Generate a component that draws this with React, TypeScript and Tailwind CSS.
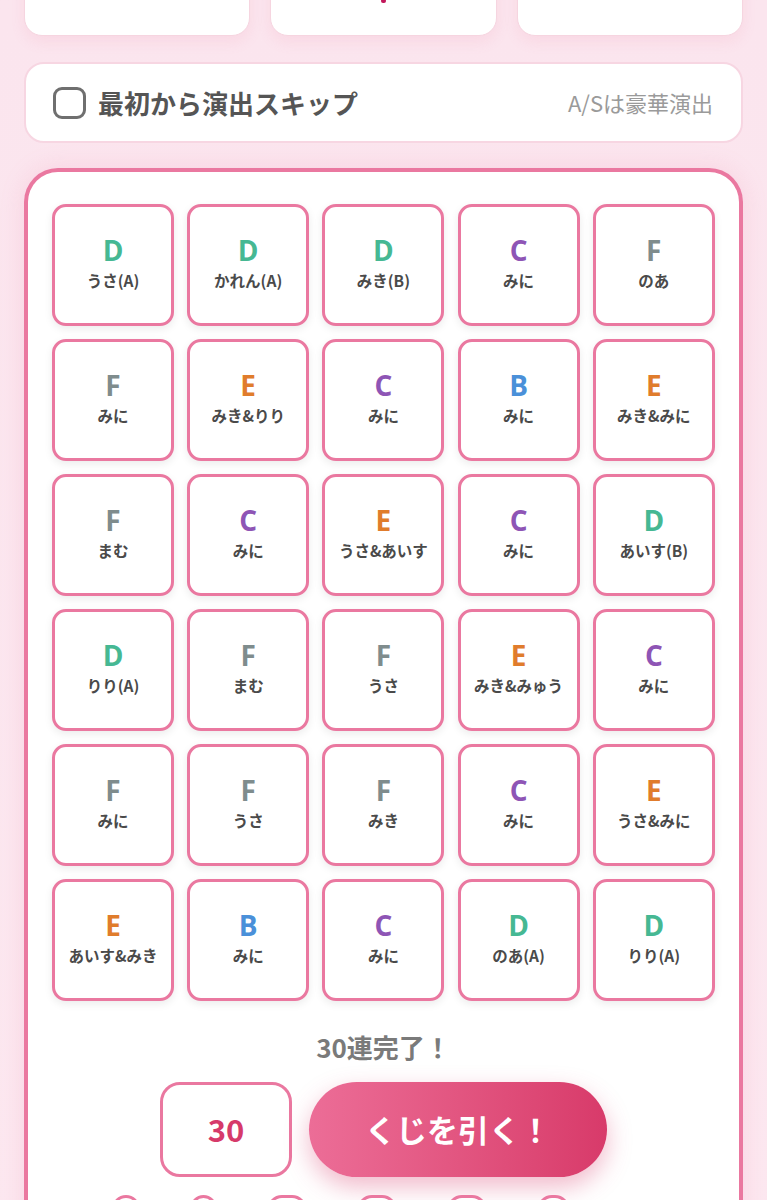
import React from 'react';

type Pull = { rank: string; name: string };

const pulls: Pull[] = [
  { rank: 'D', name: 'うさ(A)' },
  { rank: 'D', name: 'かれん(A)' },
  { rank: 'D', name: 'みき(B)' },
  { rank: 'C', name: 'みに' },
  { rank: 'F', name: 'のあ' },
  { rank: 'F', name: 'みに' },
  { rank: 'E', name: 'みき&りり' },
  { rank: 'C', name: 'みに' },
  { rank: 'B', name: 'みに' },
  { rank: 'E', name: 'みき&みに' },
  { rank: 'F', name: 'まむ' },
  { rank: 'C', name: 'みに' },
  { rank: 'E', name: 'うさ&あいす' },
  { rank: 'C', name: 'みに' },
  { rank: 'D', name: 'あいす(B)' },
  { rank: 'D', name: 'りり(A)' },
  { rank: 'F', name: 'まむ' },
  { rank: 'F', name: 'うさ' },
  { rank: 'E', name: 'みき&みゅう' },
  { rank: 'C', name: 'みに' },
  { rank: 'F', name: 'みに' },
  { rank: 'F', name: 'うさ' },
  { rank: 'F', name: 'みき' },
  { rank: 'C', name: 'みに' },
  { rank: 'E', name: 'うさ&みに' },
  { rank: 'E', name: 'あいす&みき' },
  { rank: 'B', name: 'みに' },
  { rank: 'C', name: 'みに' },
  { rank: 'D', name: 'のあ(A)' },
  { rank: 'D', name: 'りり(A)' },
];

const rankColor: Record<string, string> = {
  B: 'text-[#4a90d9]',
  C: 'text-[#8e55b5]',
  D: 'text-[#46b893]',
  E: 'text-[#e07c2c]',
  F: 'text-[#7f8c8d]',
};

const font = { fontFamily: "'Noto Sans CJK JP', 'Noto Sans', sans-serif" };

function PullCard({ pull }: { pull: Pull }) {
  return (
    <div className="flex h-[122px] w-[122px] flex-col items-center justify-center rounded-[14px] border-[3px] border-[#ea78a0] bg-white pb-[5px] shadow-[0_3px_8px_rgba(0,0,0,0.08)]">
      <div className={`text-[28px] leading-[30px] font-bold ${rankColor[pull.rank]}`} style={{ fontFamily: "'Open Sans', 'Noto Sans', sans-serif" }}>
        {pull.rank}
      </div>
      <div className="mt-[4px] text-[15.5px] leading-[22px] font-bold text-[#4a4a4a]">{pull.name}</div>
    </div>
  );
}

export default function App() {
  return (
    <div className="min-h-[1200px] overflow-hidden bg-gradient-to-b from-[#fbe5ee] to-[#fce8f0] px-6" style={font}>
      {/* Top stat cards (scrolled partly out of view) */}
      <div className="mt-[-64px] grid grid-cols-3 gap-[20px]">
        <div className="h-[100px] rounded-[18px] border border-[#f6d5e0] bg-white shadow-[0_6px_14px_rgba(236,120,160,0.12)]" />
        <div className="flex h-[100px] items-end justify-center rounded-[18px] border border-[#f6d5e0] bg-white pb-[32px] shadow-[0_6px_14px_rgba(236,120,160,0.12)]">
          <div className="h-[4px] w-[5px] rounded-full bg-[#c2185b]" />
        </div>
        <div className="h-[100px] rounded-[18px] border border-[#f6d5e0] bg-white shadow-[0_6px_14px_rgba(236,120,160,0.12)]" />
      </div>

      {/* Skip option */}
      <div className="mt-[26px] flex h-[81px] items-center justify-between rounded-[20px] border-2 border-[#f7d6e2] bg-white pr-[28px] pl-[27px]">
        <label className="flex items-center gap-[12px]">
          <span className="block h-[32px] w-[33px] rounded-[9px] border-[3px] border-[#6f6f6f] bg-white" />
          <span className="text-[26px] font-bold text-[#555]">最初から演出スキップ</span>
        </label>
        <span className="text-[22px] text-[#9a9a9a]">A/Sは豪華演出</span>
      </div>

      {/* Result panel */}
      <div className="mt-[25px] rounded-t-[34px] border-[4px] border-b-0 border-[#ea78a0] bg-white px-[24px] pt-[32px] shadow-[0_0_24px_rgba(236,120,160,0.18)]">
        <div className="grid grid-cols-5 gap-[13px]">
          {pulls.map((p, i) => (
            <PullCard key={i} pull={p} />
          ))}
        </div>

        <div className="mt-[26px] text-center text-[26px] font-bold text-[#7a7a7a]">30連完了！</div>

        <div className="mt-[16px] flex justify-center gap-[17px]">
          <div className="flex h-[95px] w-[132px] items-center justify-center rounded-[20px] border-[3px] border-[#ea78a0] bg-white text-[31px] font-bold text-[#d63a6a]">
            30
          </div>
          <button className="h-[95px] w-[298px] rounded-full bg-gradient-to-r from-[#ec6d97] to-[#d83a6a] text-[31px] font-bold text-white shadow-[0_10px_24px_rgba(216,58,106,0.35)]">
            くじを引く！
          </button>
        </div>

        <div className="mt-[18px] ml-[60px] flex gap-[50px] pb-10">
          {[28, 27, 40, 40, 40, 33].map((w, i) => (
            <div key={i} className="h-[30px] rounded-full border-[3px] border-[#ea78a0] bg-white" style={{ width: w }} />
          ))}
        </div>
      </div>
    </div>
  );
}
